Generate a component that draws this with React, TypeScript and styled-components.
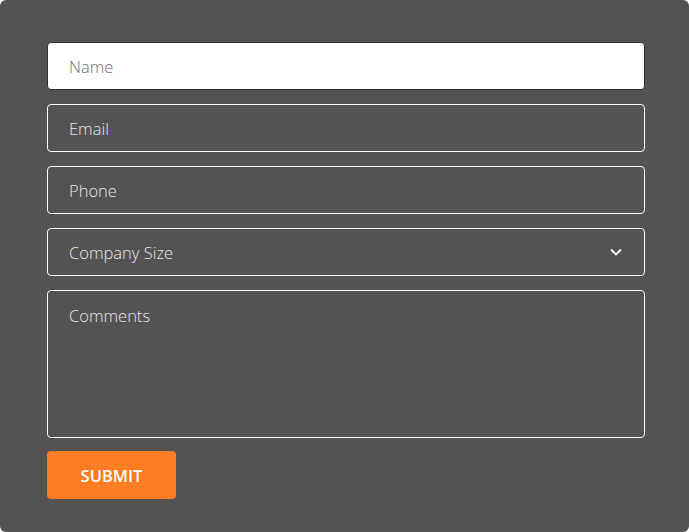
import React from "react";
import styled, { createGlobalStyle } from "styled-components";

const Global = createGlobalStyle`
  html, body { margin: 0; padding: 0; background: #ffffff; }
  * { box-sizing: border-box; }
`;

const Panel = styled.form`
  width: 689px;
  height: 532px;
  background: #545253;
  border-radius: 6px;
  padding: 42px 44px 33px 47px;
  display: flex;
  flex-direction: column;
  gap: 14px;
  font-family: "Open Sans", Lato, sans-serif;
`;

const Field = styled.input<{ $light?: boolean }>`
  display: block;
  width: 100%;
  height: 48px;
  flex: 0 0 48px;
  border-radius: 4px;
  border: 1px solid ${(p) => (p.$light ? "#2f2d2e" : "#ffffff")};
  background: ${(p) => (p.$light ? "#ffffff" : "transparent")};
  padding: 0 21px;
  font-family: inherit;
  font-weight: 300;
  font-size: 16.5px;
  color: #222;
  outline: none;
  &::placeholder {
    color: ${(p) => (p.$light ? "#6e6e6e" : "#e8e8e8")};
  }
`;

const SelectBox = styled.div`
  height: 48px;
  flex: 0 0 48px;
  border-radius: 4px;
  border: 1px solid #ffffff;
  display: flex;
  align-items: center;
  justify-content: space-between;
  padding: 0 22px 0 21px;
  color: #e8e8e8;
  font-weight: 300;
  font-size: 16.5px;
`;

const Area = styled.textarea`
  display: block;
  width: 100%;
  height: 148px;
  flex: 0 0 148px;
  border-radius: 4px;
  border: 1px solid #ffffff;
  background: transparent;
  padding: 13px 21px;
  font-family: inherit;
  font-weight: 300;
  font-size: 16.5px;
  color: #fff;
  resize: none;
  outline: none;
  &::placeholder { color: #e8e8e8; }
`;

const Submit = styled.button`
  width: 129px;
  height: 48px;
  flex: 0 0 48px;
  margin-top: -1px;
  border: none;
  border-radius: 4px;
  background: #fe7c22;
  color: #fff;
  font-family: inherit;
  font-weight: 600;
  font-size: 16.5px;
  cursor: pointer;
`;

export default function App() {
  return (
    <>
      <Global />
      <Panel onSubmit={(e) => e.preventDefault()}>
        <Field $light placeholder="Name" />
        <Field placeholder="Email" />
        <Field placeholder="Phone" />
        <SelectBox>
          <span>Company Size</span>
          <svg width="12" height="8" viewBox="0 0 12 8" fill="none">
            <path d="M1 1.5 L6 6.5 L11 1.5" stroke="#fff" strokeWidth="1.8" />
          </svg>
        </SelectBox>
        <Area placeholder="Comments" />
        <Submit type="submit">SUBMIT</Submit>
      </Panel>
    </>
  );
}
